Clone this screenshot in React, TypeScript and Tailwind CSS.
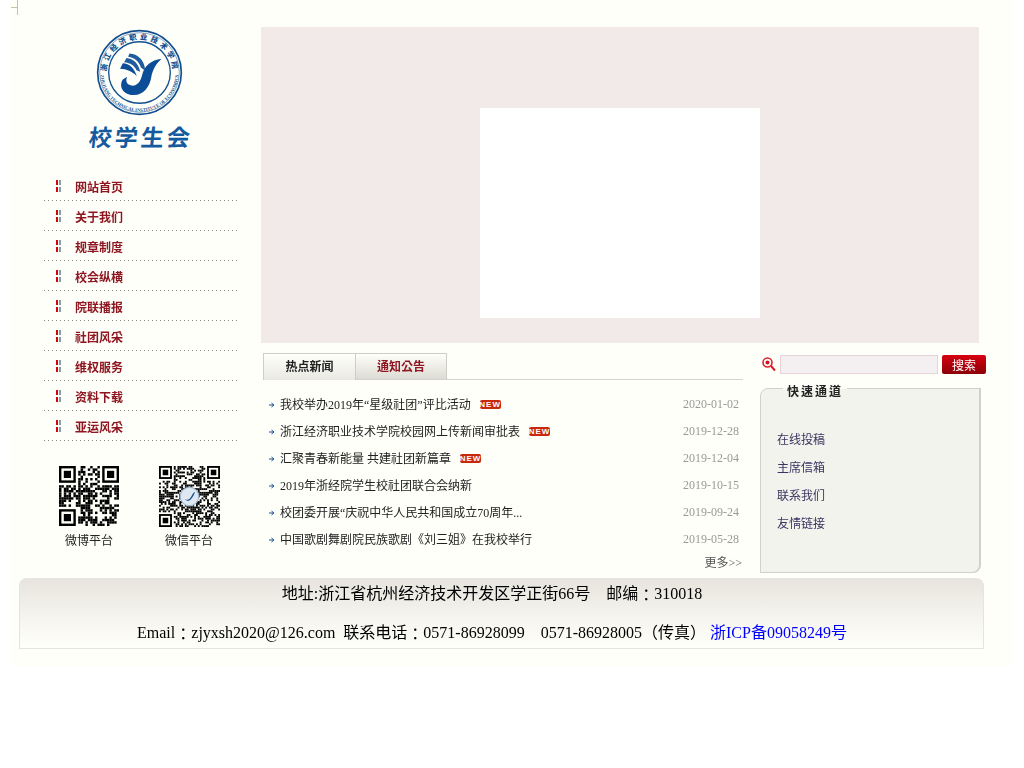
import React from "react";

const nav = ["网站首页", "关于我们", "规章制度", "校会纵横", "院联播报", "社团风采", "维权服务", "资料下载", "亚运风采"];
const news = [
  ["我校举办2019年“星级社团”评比活动", "2020-01-02", true],
  ["浙江经济职业技术学院校园网上传新闻审批表", "2019-12-28", true],
  ["汇聚青春新能量 共建社团新篇章", "2019-12-04", true],
  ["2019年浙经院学生校社团联合会纳新", "2019-10-15", false],
  ["校团委开展“庆祝中华人民共和国成立70周年...", "2019-09-24", false],
  ["中国歌剧舞剧院民族歌剧《刘三姐》在我校举行", "2019-05-28", false],
] as const;
const links = ["在线投稿", "主席信箱", "联系我们", "友情链接"];

function Qr({ n, seed, logo, size }: { n: number; seed: number; logo?: boolean; size: number }) {
  const cells: React.ReactNode[] = [];
  let s = seed;
  const rnd = () => {
    s = (s * 1103515245 + 12345) & 0x7fffffff;
    return (s >> 12) % 100;
  };
  const inFinder = (x: number, y: number) => (x < 8 && y < 8) || (x >= n - 8 && y < 8) || (x < 8 && y >= n - 8);
  for (let y = 0; y < n; y++) {
    for (let x = 0; x < n; x++) {
      const v = rnd();
      if (!inFinder(x, y) && v < 52) cells.push(<rect key={`${x}-${y}`} x={x} y={y} width={1.02} height={1.02} />);
    }
  }
  const finder = (x: number, y: number) => (
    <g key={`f${x}${y}`}>
      <rect x={x} y={y} width={7} height={7} />
      <rect x={x + 1} y={y + 1} width={5} height={5} fill="#fffffa" />
      <rect x={x + 2} y={y + 2} width={3} height={3} />
    </g>
  );
  return (
    <svg width={size} height={size} viewBox={`0 0 ${n} ${n}`} fill="#000">
      {cells}
      {finder(0, 0)}
      {finder(n - 7, 0)}
      {finder(0, n - 7)}
      {logo && (
        <g>
          <circle cx={n / 2} cy={n / 2} r={5} fill="#dfe8f1" stroke="#9db8d2" strokeWidth={0.6} />
          <path d={`M${n / 2 + 3} ${n / 2 - 2.5}C${n / 2 + 1} ${n / 2 - 2} ${n / 2 + 1} ${n / 2 + 3} ${n / 2 - 2.5} ${n / 2 + 1.5}C${n / 2} ${n / 2 + 4} ${n / 2 + 2} ${n / 2} ${n / 2 + 3} ${n / 2 - 2.5}Z`} fill="#124f94" />
        </g>
      )}
    </svg>
  );
}

function Seal() {
  return (
    <svg width={87} height={87} viewBox="50 15 260 260" className="block">
      <defs>
        <path id="sealTop" d="M 81 145 A 99 99 0 0 1 279 145" />
        <path id="sealBottom" d="M 63 145 A 117 117 0 0 0 297 145" />
      </defs>
      <circle cx="180" cy="145" r="125" fill="none" stroke="#124f8f" strokeWidth="5" />
      <circle cx="180" cy="145" r="119" fill="none" stroke="#124f8f" strokeWidth="1.5" />
      <circle cx="180" cy="145" r="92" fill="none" stroke="#124f8f" strokeWidth="4" />
      <text fill="#124f8f" fontSize="22" fontWeight="900" fontFamily="'Noto Sans CJK KR',sans-serif">
        <textPath href="#sealTop" startOffset="1%" textLength="298">浙江经济职业技术学院</textPath>
      </text>
      <text fill="#124f8f" fontSize="14" fontWeight="700" fontFamily="'Liberation Serif',serif">
        <textPath href="#sealBottom" startOffset="50%" textAnchor="middle">ZHEJIANG TECHNICAL INSTITUTE OF ECONOMICS</textPath>
      </text>
      <path d="M246 104C214 108 194 126 188 152C183 176 170 186 156 184C143 182 137 172 143 158L130 166C118 184 128 208 154 212C192 217 210 188 215 160C219 136 232 116 246 104Z" fill="#0c4d98" />
      <path d="M150 88C178 90 196 110 197 140L184 130C179 112 166 101 146 98Z" fill="#1f5c9e" />
      <path d="M141 102C162 104 177 118 182 143L171 138C165 124 153 116 134 114Z" fill="#1f5c9e" />
      <path d="M130 117C150 118 164 130 172 156C157 141 142 135 122 134Z" fill="#0c4d98" />
    </svg>
  );
}

function NewBadge() {
  return (
    <span className="ml-[9px] inline-flex h-[9px] w-[21px] shrink-0 items-center justify-center rounded-[2px] bg-[#c8280c] font-['Liberation_Sans',sans-serif] text-[8px] leading-none font-bold tracking-[1px] text-white">
      NEW
    </span>
  );
}

function SearchIcon() {
  return (
    <svg width={14} height={15} viewBox="0 0 14 15" fill="none" className="shrink-0">
      <circle cx="5.5" cy="5.5" r="4.5" stroke="#e0222a" strokeWidth="1.6" fill="#fff" />
      <circle cx="5.5" cy="5.5" r="2" fill="#d01420" />
      <path d="M9 9l4 4.5" stroke="#d81c24" strokeWidth="2" />
    </svg>
  );
}

function Colon() {
  return <span className="relative top-[2px]">：</span>;
}

export default function App() {
  return (
    <div className="min-h-[768px] bg-white font-['Liberation_Serif','Noto_Sans_CJK_KR',serif] text-black">
      <div className="relative ml-[10px] h-[666px] w-[1003px] bg-[#fffffa] pt-[27px]">
        <div className="absolute top-0 left-[1px] h-[15px] w-[7px] border-r border-[#cdbfa6]">
          <div className="mt-[7px] h-px w-[6px] bg-[#cdbfa6]" />
        </div>

        <div className="flex h-[551px]">
          <aside className="w-[251px] shrink-0">
            <div className="flex flex-col items-center pl-[8px]">
              <div className="mt-[2px] pr-[1px]"><Seal /></div>
              <div className="mt-[5px] ml-[3px] -skew-x-6 font-['Noto_Sans_CJK_KR',sans-serif] text-[23px] leading-[30px] font-bold tracking-[3px] text-[#155a9e]">
                校学生会
              </div>
            </div>
            <ul className="mt-[20px] ml-[34px] w-[193px]">
              {nav.map((t) => (
                <li
                  key={t}
                  className="flex h-[30px] items-center bg-[repeating-linear-gradient(90deg,#8a8a84_0_1px,transparent_1px_4px)] bg-[length:100%_1px] bg-bottom bg-no-repeat pt-[2px] pl-[12px]"
                >
                  <span className="mb-[2px] flex h-[12px] w-[5px] justify-between">
                    <span className="flex h-full w-[2px] flex-col justify-between">
                      <span className="h-[5px] bg-[#d0060f]" />
                      <span className="h-[5px] bg-[#d0060f]" />
                    </span>
                    <span className="flex h-full w-[2px] flex-col justify-between">
                      <span className="h-[5px] bg-[#8b9ba8]" />
                      <span className="h-[5px] bg-[#8b9ba8]" />
                    </span>
                  </span>
                  <span className="ml-[14px] font-['Noto_Sans_CJK_KR',sans-serif] text-[12px] font-bold text-[#8e1620] will-change-transform">{t}</span>
                </li>
              ))}
            </ul>
            <div className="mt-[25px] ml-[49px] flex">
              <div className="flex w-[100px] flex-col">
                <div className="h-[62px]"><Qr n={25} seed={7} size={60} /></div>
                <div className="mt-[4px] w-[60px] text-center text-[12px] leading-[18px] whitespace-nowrap text-[#222] will-change-transform">微博平台</div>
              </div>
              <div className="flex w-[60px] flex-col">
                <div className="h-[62px]"><Qr n={33} seed={21} logo size={61} /></div>
                <div className="mt-[4px] text-center text-[12px] leading-[18px] whitespace-nowrap text-[#222] will-change-transform">微信平台</div>
              </div>
            </div>
          </aside>

          <div className="w-[718px] shrink-0">
            <div className="flex h-[316px] items-end justify-center bg-[#f2e9e9] pb-[25px]">
              <div className="h-[210px] w-[280px] bg-white" />
            </div>
            <div className="flex">
              <section className="mt-[10px] ml-[2px] w-[480px] shrink-0">
                <div className="flex h-[27px] border-b border-[#d5d3cc]">
                  <div className="h-[27px] w-[93px] border-x border-t border-[#cfcec6] bg-gradient-to-b from-[#fffffa] to-[#e9e9e2] text-center text-[12px] leading-[26px] font-bold text-[#222]">
                    <div className="will-change-transform">热点新闻</div>
                  </div>
                  <div className="h-[26px] w-[91px] border-t border-r border-[#cfcec6] bg-gradient-to-b from-[#fffffa] to-[#dcdbd4] text-center text-[12px] leading-[26px] font-bold text-[#8e1620]">
                    <div className="will-change-transform">通知公告</div>
                  </div>
                </div>
                <ul className="mt-[11px]">
                  {news.map(([title, date, isNew]) => (
                    <li key={date} className="flex h-[27px] items-center pr-[4px] pl-[6px] text-[12px]">
                      <svg width={6} height={6} viewBox="0 0 6 6" className="shrink-0">
                        <path d="M0 3h4M2.5 1l2.5 2-2.5 2" fill="none" stroke="#1a4f9c" strokeWidth="1" />
                      </svg>
                      <span className="ml-[5px] whitespace-nowrap text-[#222] will-change-transform">{title}</span>
                      {isNew && <NewBadge />}
                      <span className="mb-[1px] ml-auto text-[#999] will-change-transform">{date}</span>
                    </li>
                  ))}
                </ul>
                <div className="mt-[1px] pr-[1px] text-right text-[12px] leading-[18px] text-[#555] will-change-transform">更多&gt;&gt;</div>
              </section>

              <section className="mt-[12px] ml-[17px] w-[226px] shrink-0">
                <div className="flex h-[19px] items-center pl-[2px]">
                  <SearchIcon />
                  <div className="ml-[4px] h-[19px] w-[158px] border border-[#e5d5d8] bg-[#f4f0f2]" />
                  <div className="ml-[4px] h-[19px] w-[44px] rounded-[2px] bg-gradient-to-b from-[#d8000f] to-[#8c0008] text-center font-['Noto_Sans_CJK_KR',sans-serif] text-[12px] leading-[19px] text-white">
                    <div className="will-change-transform">搜索</div>
                  </div>
                </div>
                <div className="mt-[14px] h-[185px] w-[220px] rounded-tl-[8px] rounded-br-[8px] border border-[#d3d1c6] bg-[#f3f3ed] shadow-[1px_0_0_#d3d1c6]">
                  <div className="-mt-[5px] ml-[22px] w-fit bg-[linear-gradient(#fffffa_0_5px,transparent_5px)] px-[4px] font-['Noto_Sans_CJK_KR',sans-serif] text-[12px] leading-[14px] font-bold tracking-[2px] text-[#222]">
                    <div className="will-change-transform">快速通道</div>
                  </div>
                  <ul className="mt-[28px] pl-[16px]">
                    {links.map((l) => (
                      <li key={l} className="h-[28px] text-[12px] leading-[28px] text-[#3a3560] will-change-transform">{l}</li>
                    ))}
                  </ul>
                </div>
              </section>
            </div>
          </div>
        </div>

        <footer className="ml-[9px] h-[71px] w-[965px] rounded-t-[8px] border-x border-b border-[#e6e5dd] bg-gradient-to-b from-[#e6e4dc] via-[#f6f5f0] via-60% to-[#fffffa] pr-[19px] text-center text-[16px] leading-[18px]">
          <p className="pt-[7px] will-change-transform">地址:浙江省杭州经济技术开发区学正街66号　邮编<Colon />310018</p>
          <p className="mt-[21px] will-change-transform">
            Email<Colon />zjyxsh2020@126.com&nbsp; 联系电话<Colon />0571-86928099　0571-86928005（传真） <span className="text-[#0000ff]">浙ICP备09058249号</span>
          </p>
        </footer>
      </div>
    </div>
  );
}
